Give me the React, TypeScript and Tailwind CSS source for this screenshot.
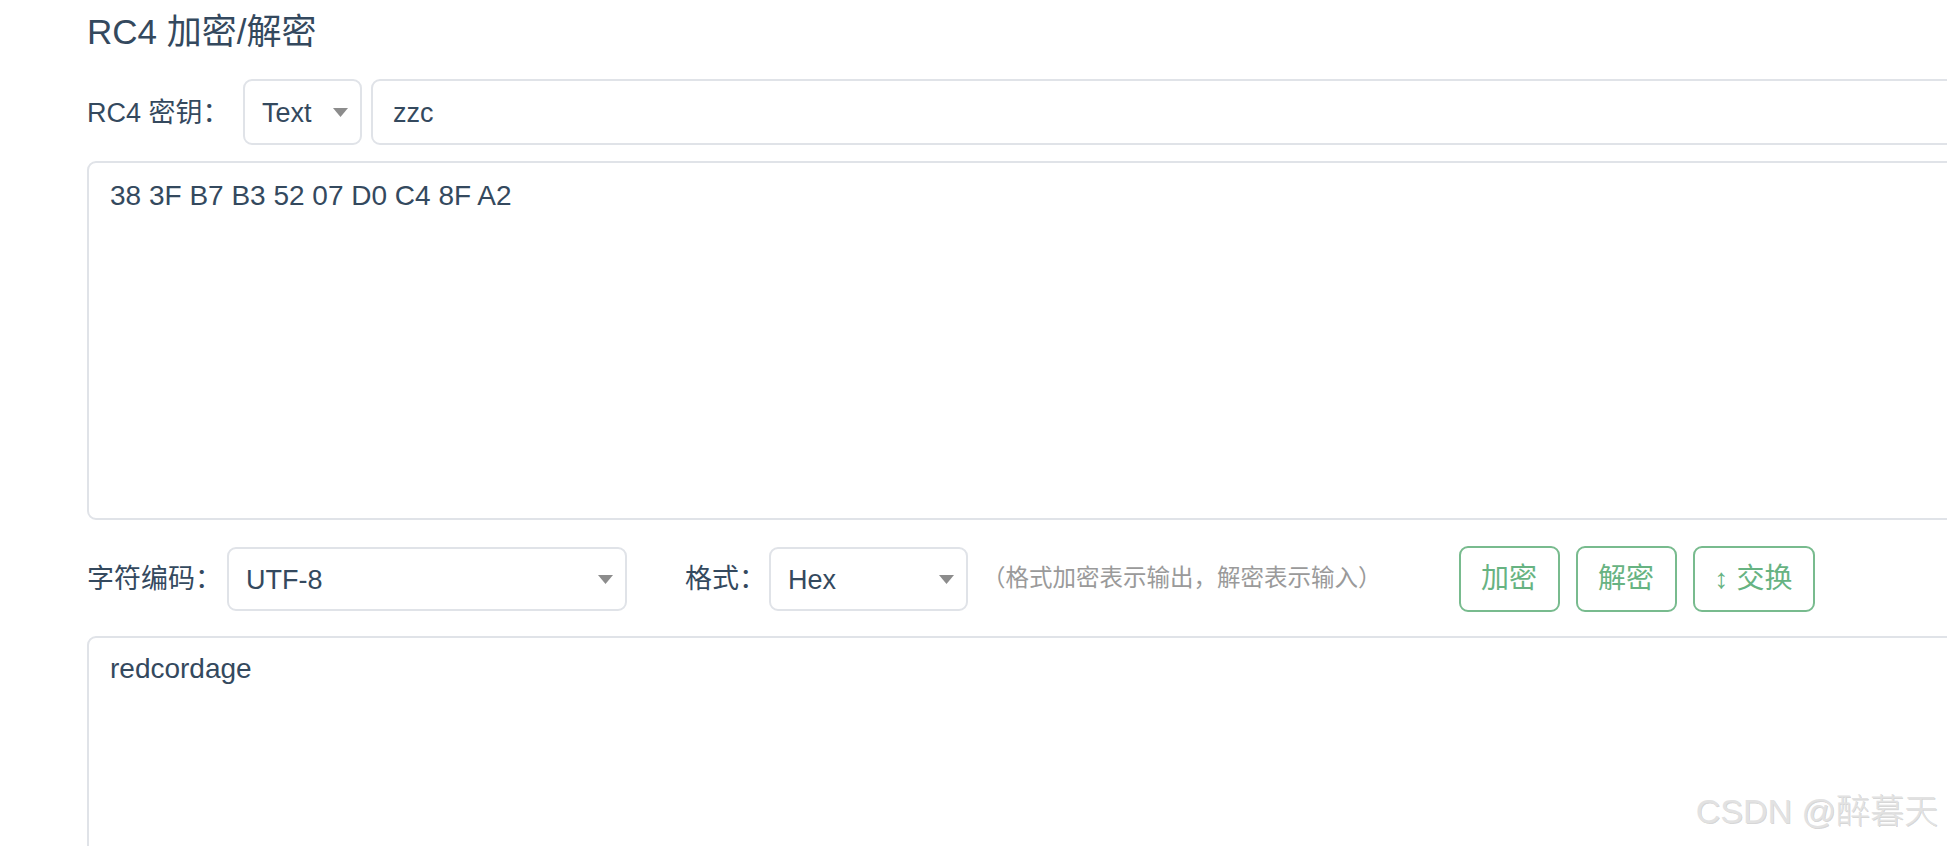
import React from "react";

const FONT = "font-['Liberation_Sans','Noto_Sans_CJK_SC',sans-serif]";

function Caret() {
  return (
    <svg width="15" height="9" viewBox="0 0 15 9" className="shrink-0">
      <path d="M0 0h15L7.5 9z" fill="#8c8c8c" />
    </svg>
  );
}

function SelectBox({ value, className }: { value: string; className: string }) {
  return (
    <div
      className={`flex items-center justify-between rounded-[9px] border-2 border-[#e0e3e8] bg-white pl-[17px] pr-[12px] ${className}`}
    >
      <span className="pt-[2px]">{value}</span>
      <Caret />
    </div>
  );
}

function GreenButton({ children, width }: { children: React.ReactNode; width: string }) {
  return (
    <button
      className={`flex h-[66px] items-center justify-center rounded-[9px] border-2 border-[#78bb8e] bg-white text-[28px] text-[#67b382] ${width}`}
    >
      {children}
    </button>
  );
}

export default function App() {
  return (
    <div className={`relative h-[846px] w-[1947px] overflow-hidden bg-white text-[#34495e] ${FONT}`}>
      <div className="w-[2100px] pl-[87px]">
        {/* Title */}
        <h1 className="h-[62px] pt-[1px] text-[35px] leading-[62px]">RC4 加密/解密</h1>

        {/* Key row */}
        <div className="mt-[17px] flex h-[66px] items-center">
          <label className="w-[156px] shrink-0 pt-[2px] text-[27px]">RC4 密钥：</label>
          <SelectBox value="Text" className="h-full w-[119px] text-[27px]" />
          <div className="ml-[9px] flex h-full flex-1 items-center rounded-[9px] border-2 border-[#e0e3e8] pl-[20px] pt-[2px] text-[27px]">
            zzc
          </div>
        </div>

        {/* Input textarea */}
        <div className="mt-[16px] h-[359px] rounded-[9px] border-2 border-[#e0e3e8] px-[21px] py-[12px] text-[28px] leading-[42px]">
          38 3F B7 B3 52 07 D0 C4 8F A2
        </div>

        {/* Options row */}
        <div className="mt-[27px] flex h-[64px] items-center">
          <label className="w-[140px] shrink-0 text-[27px]">字符编码：</label>
          <SelectBox value="UTF-8" className="h-full w-[400px] text-[27px]" />
          <label className="ml-[58px] w-[84px] shrink-0 text-[27px]">格式：</label>
          <SelectBox value="Hex" className="h-full w-[199px] text-[27px]" />
          <span className="ml-[14px] text-[23.5px] text-[#9a9a9a]">（格式加密表示输出，解密表示输入）</span>
          <div className="ml-[77px] flex gap-[16px]">
            <GreenButton width="w-[101px]">加密</GreenButton>
            <GreenButton width="w-[101px]">解密</GreenButton>
            <GreenButton width="w-[122px]">
              <span className="mr-[8px]">↕</span>交换
            </GreenButton>
          </div>
        </div>

        {/* Output textarea */}
        <div className="mt-[25px] h-[400px] rounded-[9px] border-2 border-[#e0e3e8] px-[21px] py-[10px] text-[28px] leading-[42px]">
          redcordage
        </div>
      </div>

      {/* Watermark */}
      <div className="absolute bottom-[9px] right-[9px] text-[34px] font-light text-[#e2e2e2] [text-shadow:1px_1px_0_rgba(0,0,0,0.18)]">
        CSDN @醉暮天
      </div>
    </div>
  );
}
